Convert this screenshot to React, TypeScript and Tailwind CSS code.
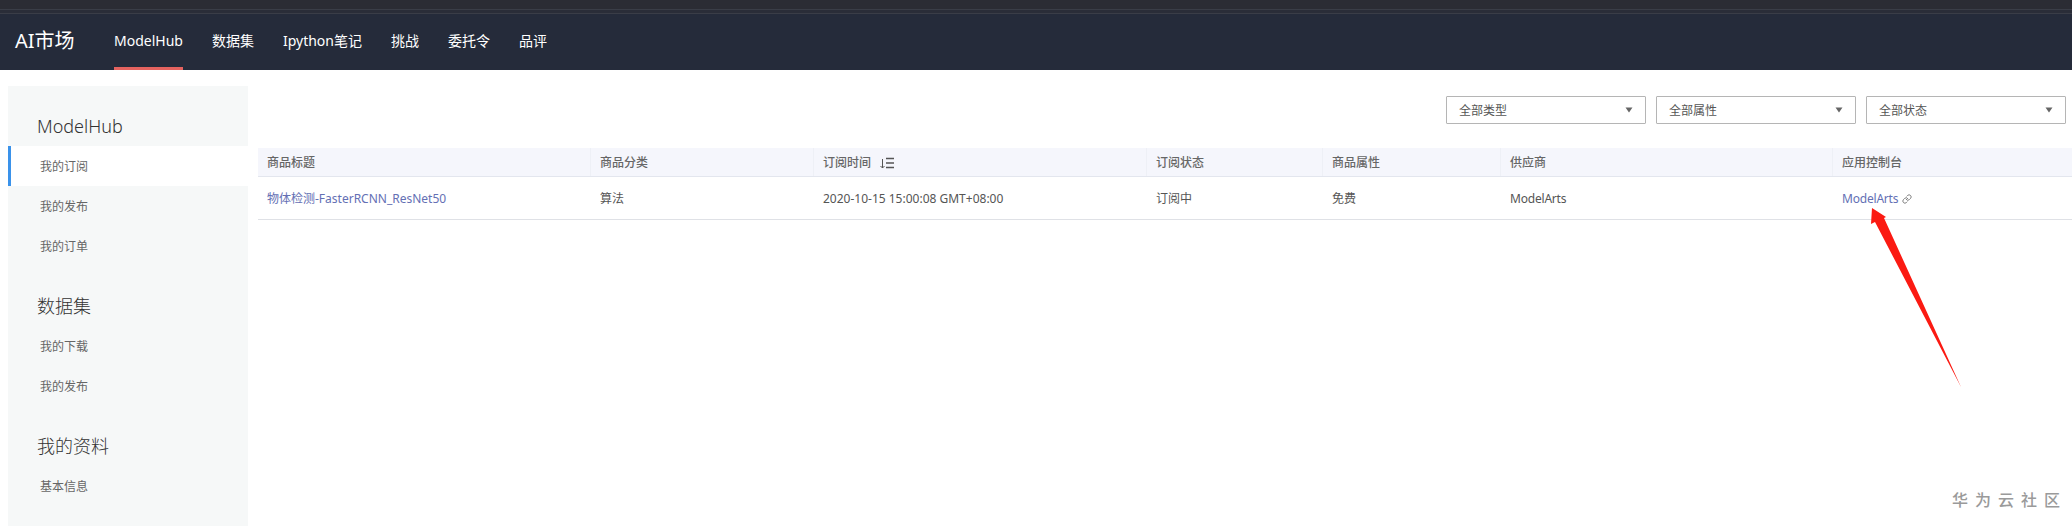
import { Link as LinkIcon } from 'lucide-react';

const navItems = ['ModelHub', '数据集', 'Ipython笔记', '挑战', '委托令', '品评'];

const sideGroups = [
  { title: 'ModelHub', items: ['我的订阅', '我的发布', '我的订单'] },
  { title: '数据集', items: ['我的下载', '我的发布'] },
  { title: '我的资料', items: ['基本信息'] },
];

const columns = [
  { label: '商品标题', width: 'w-[332px]' },
  { label: '商品分类', width: 'w-[223px]' },
  { label: '订阅时间', width: 'w-[333px]' },
  { label: '订阅状态', width: 'w-[176px]' },
  { label: '商品属性', width: 'w-[178px]' },
  { label: '供应商', width: 'w-[332px]' },
  { label: '应用控制台', width: 'flex-1' },
];

const SortIcon = () => (
  <svg width="15" height="12" viewBox="0 0 15 12" className="ml-[8px] text-[#555]" fill="none" stroke="currentColor">
    <path d="M3.5 2V11M1.5 9L3.5 11L5.5 9" strokeWidth="1" />
    <path d="M7 1.5H15M7 6H15M7 10.5H15" strokeWidth="1.6" />
  </svg>
);

const FilterSelect = ({ label }: { label: string }) => (
  <div className="flex h-[28px] w-[200px] items-center justify-between rounded-[1px] border border-[#b5b5b5] bg-white pl-3 pr-[12px] text-[12px] text-[#555]">
    <span className="pt-[2px]">{label}</span>
    <svg width="8" height="6" viewBox="0 0 8 6">
      <path d="M0.5 0.5H7.5L4 5.5Z" fill="#666" />
    </svg>
  </div>
);

const App = () => {
  return (
    <div className="relative flex h-[526px] w-[2072px] flex-col overflow-hidden bg-white font-['Noto_Sans','Noto_Sans_CJK_SC',sans-serif]">
      <div className="h-[9px] bg-[#2b2c34]" />
      <div className="h-[5px] border-y border-[#3a3d47] bg-[#2a2d38]" />

      <header className="flex h-[56px] items-stretch bg-[#252b3a] text-white">
        <div className="flex w-[114px] items-center pb-[2px] pl-[15px] text-[20px]">AI市场</div>
        <nav className="flex gap-[29px] text-[14px]">
          {navItems.map((item, i) => (
            <div
              key={item}
              className={`flex items-center border-b-[3px] ${i === 0 ? 'border-[#e5635f]' : 'border-transparent'}`}
            >
              {item}
            </div>
          ))}
        </nav>
      </header>

      <div className="flex flex-1">
        <aside className="ml-2 mt-4 w-[240px] bg-[#f6f8f8] pt-[24px]">
          {sideGroups.map((group, g) => (
            <div key={group.title} className={g > 0 ? 'mt-[24px]' : ''}>
              <h3 className="flex h-[32px] items-center pl-[29px] text-[18px] font-light text-[#333]">{group.title}</h3>
              <ul className="mt-[4px]">
                {group.items.map((item, i) => (
                  <li
                    key={item}
                    className={`flex h-[40px] items-center border-l-[3px] pl-[29px] pt-[2px] text-[12px] text-[#666] ${
                      g === 0 && i === 0 ? 'border-[#3a92ea] bg-white' : 'border-transparent'
                    }`}
                  >
                    {item}
                  </li>
                ))}
              </ul>
            </div>
          ))}
        </aside>

        <main className="ml-[10px] flex-1 pt-[26px]">
          <div className="flex justify-end gap-[10px] pr-[6px]">
            <FilterSelect label="全部类型" />
            <FilterSelect label="全部属性" />
            <FilterSelect label="全部状态" />
          </div>

          <div className="mt-[24px] text-[12px]">
            <div className="flex h-[29px] border-b border-[#e3e6ee] bg-[#f5f6fc] font-medium text-[#666]">
              {columns.map((col, i) => (
                <div
                  key={col.label}
                  className={`flex items-center pl-[9px] pt-[2px] ${col.width} ${i > 0 ? 'border-l border-[#eef0f6]' : ''}`}
                >
                  {col.label}
                  {col.label === '订阅时间' && <SortIcon />}
                </div>
              ))}
            </div>
            <div className="flex h-[43px] border-b border-[#dfe1e6] pt-[1px] text-[#555]">
              <div className="flex w-[332px] items-center pl-[9px] text-[#6470b4]">物体检测-FasterRCNN_ResNet50</div>
              <div className="flex w-[223px] items-center pl-[10px]">算法</div>
              <div className="flex w-[333px] items-center pl-[10px]">2020-10-15 15:00:08 GMT+08:00</div>
              <div className="flex w-[176px] items-center pl-[10px]">订阅中</div>
              <div className="flex w-[178px] items-center pl-[10px]">免费</div>
              <div className="flex w-[332px] items-center pl-[10px] tracking-[-0.2px]">ModelArts</div>
              <div className="flex flex-1 items-center pl-[10px] tracking-[-0.2px] text-[#6470b4]">
                ModelArts
                <LinkIcon size={10} className="ml-[4px] text-[#666]" />
              </div>
            </div>
          </div>
        </main>
      </div>

      {/* red annotation arrow drawn over the table */}
      <svg className="absolute left-[1860px] top-[200px]" width="110" height="195" viewBox="1860 200 110 195">
        <path d="M1872 208L1886 217L1884 218L1961 387L1875 222L1871 224Z" fill="#fb1a12" />
      </svg>

      <div className="absolute left-[1952px] top-[488px] text-[16px] leading-[24px] font-medium tracking-[7px] whitespace-nowrap text-[#9a9a9a]">
        华为云社区
      </div>
    </div>
  );
};

export default App;
